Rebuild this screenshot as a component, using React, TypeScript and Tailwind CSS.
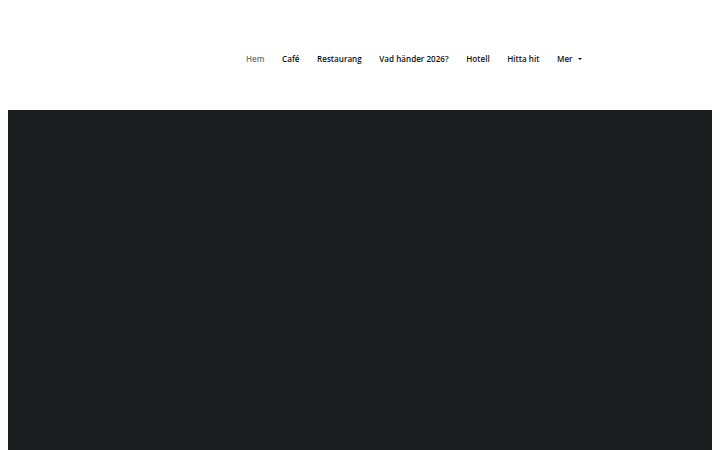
import React from 'react';

const links = ['Café', 'Restaurang', 'Vad händer 2026?', 'Hotell', 'Hitta hit'];

export default function App() {
  return (
    <div className="min-h-screen bg-white" style={{ fontFamily: '"Open Sans", sans-serif' }}>
      <header className="h-[110px] flex items-start">
        <nav className="ml-[246px] mt-[52px] flex items-center gap-[17.6px] text-[8.1px] font-semibold leading-[14px] text-[#111]">
          <a className="text-[#5f7d74]">Hem</a>
          {links.map((l) => (
            <a key={l}>{l}</a>
          ))}
          <a className="flex items-center gap-[5px]">
            Mer
            <span className="inline-block w-0 h-0 border-l-[2px] border-r-[2px] border-t-[2.5px] border-l-transparent border-r-transparent border-t-[#111]" />
          </a>
        </nav>
      </header>
      <section className="mx-[8px] h-[340px] bg-[#1b1e21]" />
    </div>
  );
}
